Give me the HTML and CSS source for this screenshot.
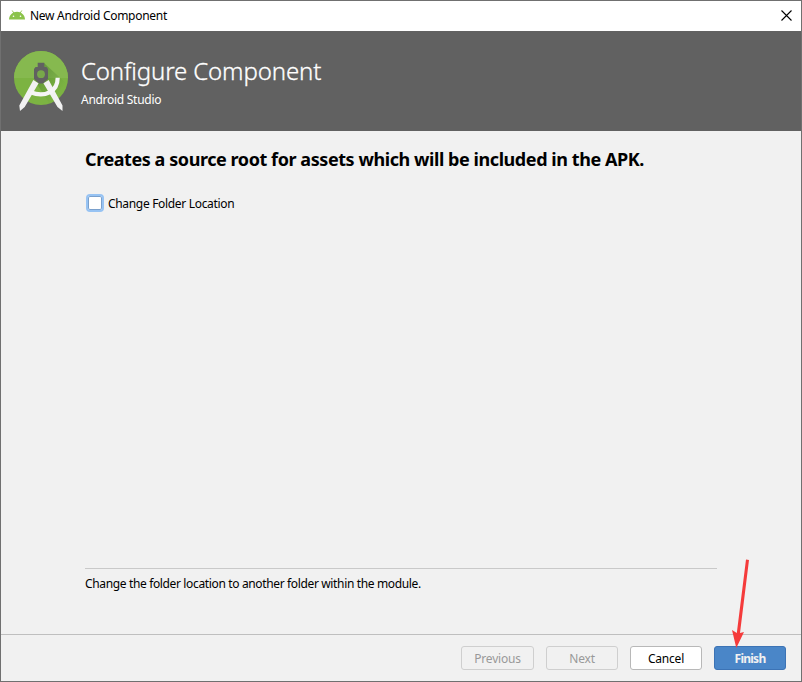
FILE: index.html
```html
<!DOCTYPE html>
<html lang="en">
<head>
<meta charset="utf-8">
<title>New Android Component</title>
<link rel="stylesheet" href="styles.css">
</head>
<body>
<div class="window">
  <div class="titlebar">
    <svg class="robot" width="16" height="10" viewBox="0 0 16 10">
      <path d="M3.2 0.5 4.8 3M12.8 0.5 11.2 3" stroke="#8bc34a" stroke-width="0.9"/>
      <path d="M0 9.500C.2 4.800 3.700 1.700 8 1.700S15.800 4.800 16 9.500Z" fill="#8bc34a"/>
      <circle cx="4.500" cy="6.200" r=".8" fill="#fff"/><circle cx="11.500" cy="6.200" r=".8" fill="#fff"/>
    </svg>
    <span class="caption">New Android Component</span>
    <svg class="close" width="11" height="11" viewBox="0 0 11 11"><path d="M.5.5 10.500 10.500M10.500.5.5 10.500" stroke="#000" stroke-width="1.100"/></svg>
  </div>
  <header class="header">
    <svg class="logo" width="56" height="62" viewBox="0 0 56 62">
      <defs>
        <clipPath id="disc"><circle cx="28" cy="28" r="27"/></clipPath>
        <linearGradient id="shade" x1="0" y1="0" x2="1" y2="1"><stop offset="0" stop-color="#33691e" stop-opacity=".5"/><stop offset=".7" stop-color="#33691e" stop-opacity="0"/></linearGradient>
      </defs>
      <circle cx="28" cy="28" r="27" fill="#7cb342"/>
      <g clip-path="url(#disc)">
        <path d="M0 0H56V28H0Z" fill="#86b94f"/>
        <path d="M31 13 56 36V56H38L22 31Z" fill="url(#shade)"/>
      </g>
      <path d="M20.300 30 25.600 33.300 11.700 57 7 61 6.300 55.500ZM30.400 33.300 35.700 30 49.500 55.500 49.500 61 44.500 57Z" fill="#f1f1f1"/>
      <path d="M17.500 42.300C32 48 44.700 41.500 44.700 27.700" fill="none" stroke="#f5f5f5" stroke-width="4.200"/>
      <path d="M24.700 12.700H31.300V17H33.500L35 19V29L32 31.500 30 33.500H26L24 31.500 21 29V19L22.500 17H24.700Z" fill="#616161"/>
      <circle cx="28" cy="24.200" r="3.900" fill="#78a84a"/>
    </svg>
    <div class="heading">
      <h1>Configure Component</h1>
      <p>Android Studio</p>
    </div>
  </header>
  <main class="content">
    <h2>Creates a source root for assets which will be included in the APK.</h2>
    <label class="option"><span class="box"></span><span class="option-text">Change Folder Location</span></label>
    <p class="hint">Change the folder location to another folder within the module.</p>
  </main>
  <footer class="footer">
    <button class="wide" disabled><span>Previous</span></button>
    <button disabled><span>Next</span></button>
    <button class="cancel"><span>Cancel</span></button>
    <button class="finish"><span>Finish</span></button>
  </footer>
</div>
<svg class="arrow" width="22" height="92" viewBox="0 0 22 92">
  <path d="M15 1.500 18 2 9 75 13 74 5.300 90 1 72 5.800 75Z" fill="#f53b3b"/>
</svg>
</body>
</html>
```
FILE: styles.css
```css
* { box-sizing: border-box; }
body { margin: 0; font: 12px/16px "Noto Sans", "Open Sans", sans-serif; color: #000; }
h1, h2, p { margin: 0; }
svg { display: block; flex: none; }
.window { width: 802px; height: 682px; border: 1px solid #707070; background: #f1f1f1; display: flex; flex-direction: column; white-space: nowrap; }
.titlebar { height: 30px; background: #fff; display: flex; align-items: center; padding: 0 9px 2px 8px; }
.robot { margin-right: 5px; }
.caption { flex: 1; padding-top: 2px; letter-spacing: -0.28px; }
.header { height: 100px; background: #616161; color: #fff; display: flex; padding: 19px 12px; }
.heading { margin-left: 12px; }
h1 { font-size: 24px; line-height: 32px; font-weight: 300; margin-top: 5px; letter-spacing: -0.13px; -webkit-text-stroke: 0.3px #fff; }
.heading p { margin-top: 5px; letter-spacing: -0.28px; }
.content { flex: 1; display: flex; flex-direction: column; align-items: flex-start; padding: 16px 84px 42px; }
h2 { font-size: 18px; line-height: 24px; font-weight: 700; letter-spacing: -0.43px; }
.option { display: flex; align-items: center; margin-top: 23px; margin-left: 1px; }
.option-text { padding-top: 2px; letter-spacing: -0.32px; }
.box { width: 18px; height: 18px; border: 2px solid #97c3f3; border-radius: 4px; background: #fff; box-shadow: inset 0 0 0 1px #7aa0cc; margin-right: 4px; }
.hint { width: 632px; margin-top: auto; border-top: 1px solid #c9c9c9; padding-top: 7px; letter-spacing: -0.355px; }
.footer { height: 47px; border-top: 1px solid #bfbfbf; display: flex; justify-content: flex-end; gap: 12px; padding: 11px 15px; }
button { width: 72px; height: 24px; padding: 2px 0 0; border: 1px solid #cfcfcf; border-radius: 3px; background: #f1f1f1; color: #999; font: inherit; line-height: 20px; letter-spacing: -0.2px; }
.wide { width: 73px; }
.cancel { background: #fff; border-color: #b8b8b8; color: #000; }
.finish { background: #4a86c8; border-color: #3c73b5; color: #f1f1f1; font-weight: 700; letter-spacing: -0.75px; }
.arrow { position: absolute; left: 731px; top: 558px; }
```
